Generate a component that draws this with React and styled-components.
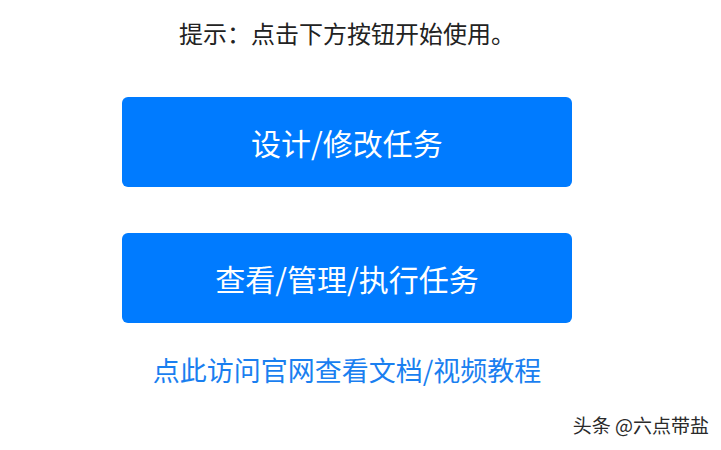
import React from "react";
import styled, { createGlobalStyle } from "styled-components";

const GlobalStyle = createGlobalStyle`
  html, body {
    margin: 0;
    padding: 0;
    background: #fff;
  }
  body {
    font-family: "Noto Sans CJK SC", "Noto Sans", sans-serif;
  }
`;

const Page = styled.div`
  position: relative;
  width: 721px;
  height: 450px;
  overflow: hidden;
  padding-left: 122px;
  box-sizing: border-box;
`;

const Column = styled.div`
  width: 450px;
  display: flex;
  flex-direction: column;
  align-items: stretch;
  text-align: center;
`;

const Hint = styled.p`
  margin: 15px 0 46px;
  font-size: 24px;
  line-height: 36px;
  color: #222;
`;

const Button = styled.button`
  height: 90px;
  margin-bottom: ${({ gap }) => gap || 0}px;
  border: none;
  border-radius: 6px;
  background: #007bff;
  color: #fff;
  font-family: inherit;
  font-size: 30px;
  cursor: pointer;
`;

const Link = styled.a`
  margin-top: 27px;
  font-size: 27px;
  line-height: 40px;
  color: #1a7ff0;
  text-decoration: none;
`;

const Watermark = styled.div`
  position: absolute;
  right: 12px;
  bottom: 12px;
  font-size: 19px;
  color: #2a2a2a;
  text-shadow: 0 0 2px #fff, 0 0 2px #fff;
`;

export default function App() {
  return (
    <Page>
      <GlobalStyle />
      <Column>
        <Hint>提示：点击下方按钮开始使用。</Hint>
        <Button gap={46}>设计/修改任务</Button>
        <Button>查看/管理/执行任务</Button>
        <Link href="#">点此访问官网查看文档/视频教程</Link>
      </Column>
      <Watermark>头条 @六点带盐</Watermark>
    </Page>
  );
}
